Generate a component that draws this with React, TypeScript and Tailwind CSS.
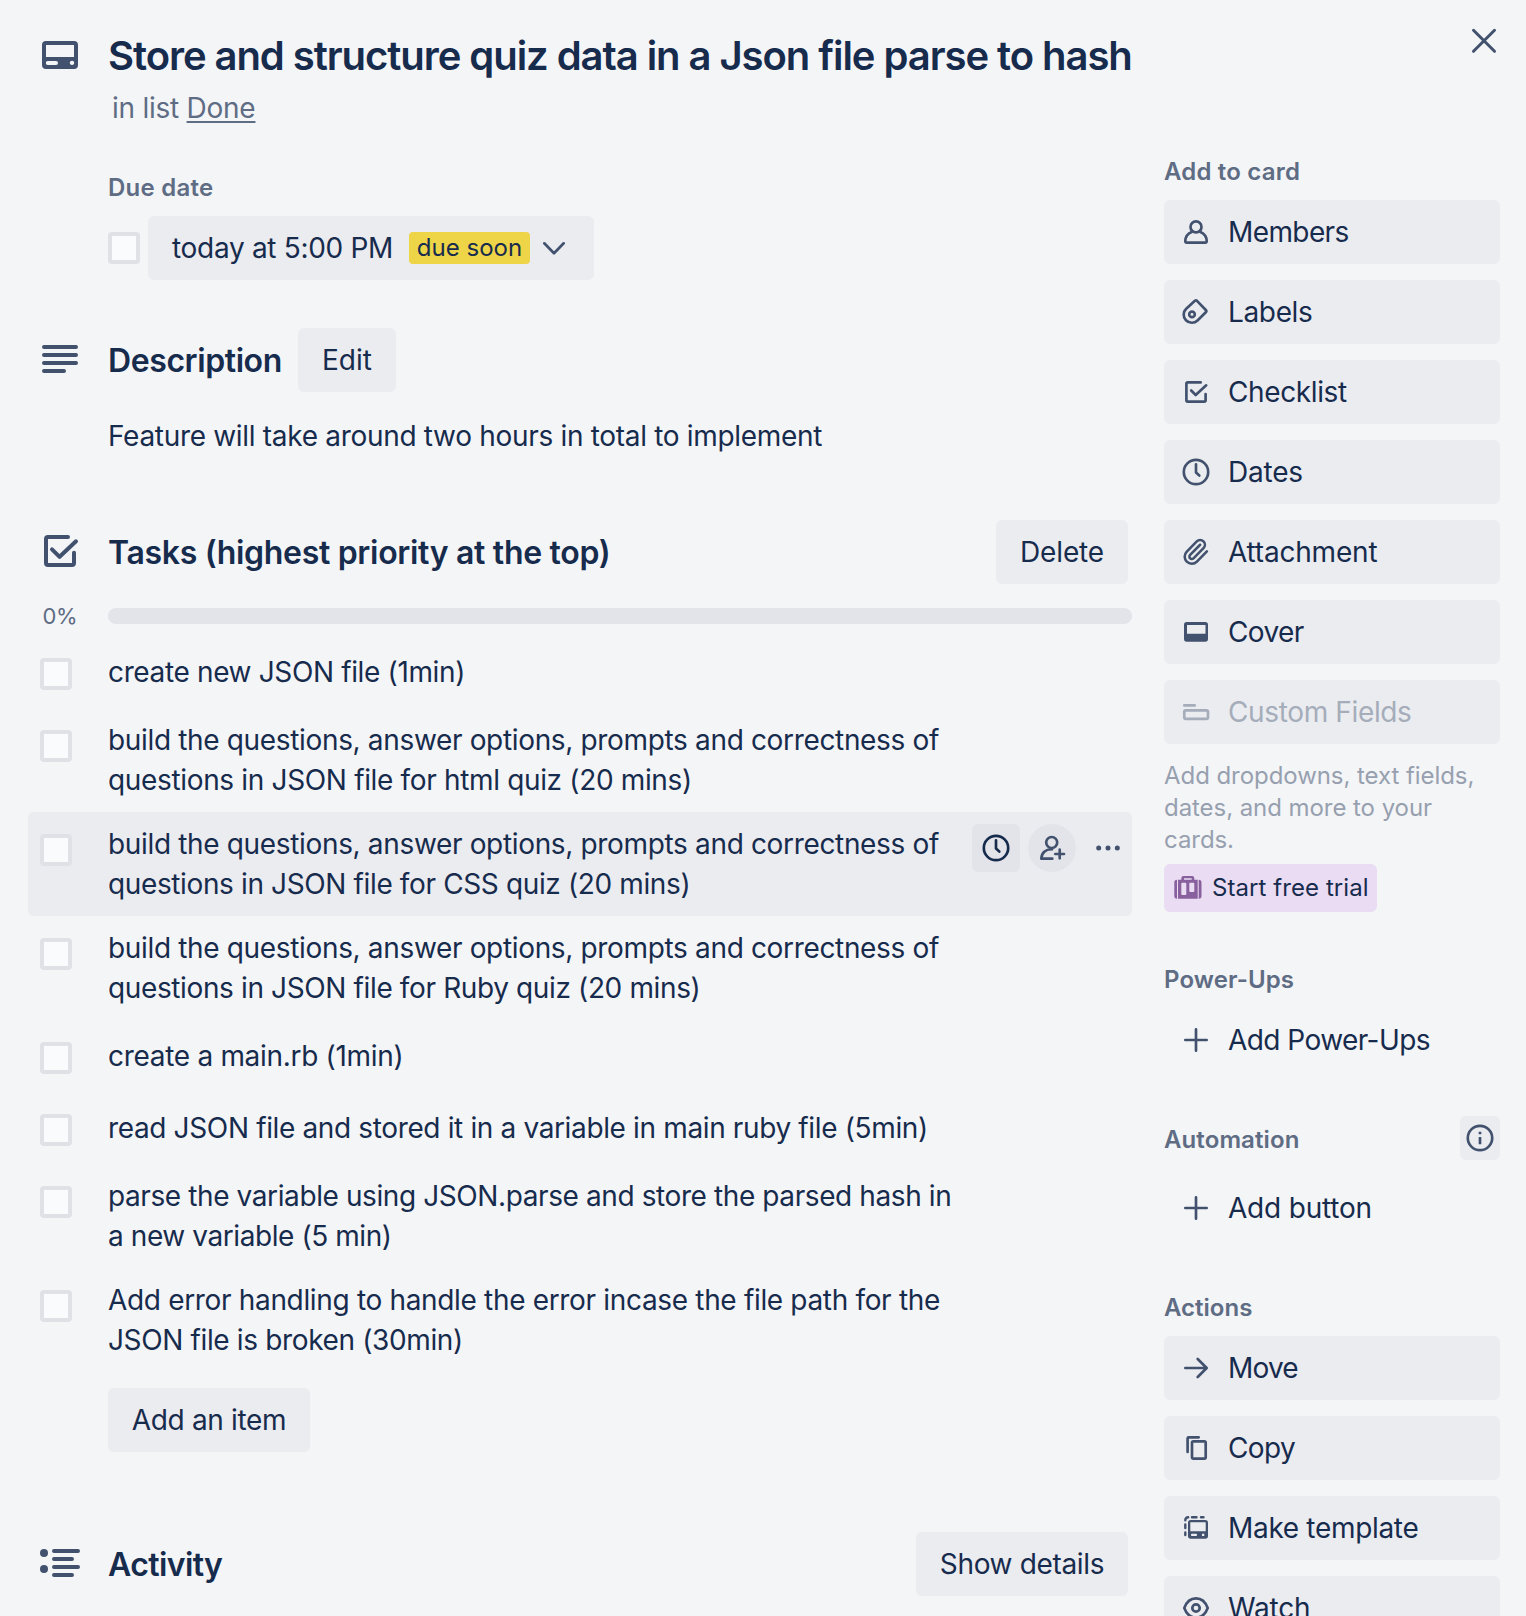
import React from "react";

type IconProps = { children: React.ReactNode; size?: number; className?: string };

function Icon({ children, size = 32, className = "" }: IconProps) {
  return (
    <svg
      width={size}
      height={size}
      viewBox={`0 0 ${size} ${size}`}
      fill="none"
      stroke="currentColor"
      strokeWidth={2.67}
      strokeLinecap="round"
      strokeLinejoin="round"
      className={`shrink-0 ${className}`}
    >
      {children}
    </svg>
  );
}

const Member = () => (
  <Icon>
    <circle cx="16" cy="10.9" r="5.5" />
    <path d="M11.6 16C7.8 17.6 5.4 21 5.3 25.1c0 .9.6 1.5 1.5 1.5h18.4c.9 0 1.5-.6 1.5-1.5-.1-4.1-2.5-7.5-6.3-9.1" />
  </Icon>
);
const Label = () => (
  <Icon>
    <path d="M6.2 12.7 14.9 4.8Q16 3.9 17 4.8L25.8 14Q26.9 15.2 25.8 16.3L17.5 24.5A8.1 8.1 0 0 1 6.2 12.7Z" />
    <circle cx="12" cy="18.4" r="2.8" />
  </Icon>
);
const Check = () => (
  <Icon>
    <path d="M20.7 6.4H7.7Q6.4 6.4 6.4 7.7V24.3Q6.4 25.6 7.7 25.6H24.3Q25.6 25.6 25.6 24.3V18" />
    <path d="M11.2 14.5 15.7 19 26.2 9.3" />
  </Icon>
);
const Clock = () => (
  <Icon>
    <circle cx="16" cy="16" r="12.2" />
    <path d="M16 8.3V16.5L19.3 19.5" />
  </Icon>
);
const Clip = () => (
  <Icon>
    <g transform="translate(1.1 1.6) scale(1.19)" strokeWidth="2.15">
      <path d="m16 6-8.414 8.586a2 2 0 0 0 2.829 2.829l8.414-8.586a4 4 0 1 0-5.657-5.657l-8.379 8.551a6 6 0 1 0 8.485 8.485l8.379-8.551" />
    </g>
  </Icon>
);
const Cover = () => (
  <Icon>
    <path
      stroke="none"
      fill="currentColor"
      fillRule="evenodd"
      d="M6.7 6H25.3A2.7 2.7 0 0 1 28 8.7V23A2.7 2.7 0 0 1 25.3 25.7H6.7A2.7 2.7 0 0 1 4 23V8.7A2.7 2.7 0 0 1 6.7 6ZM7 9V17.7H25.5V9Z"
    />
  </Icon>
);
const Fields = () => (
  <Icon>
    <path d="M4.3 9.4H14.7" />
    <rect x="4.3" y="14.4" width="23.7" height="8.4" rx="1.5" />
  </Icon>
);
const Plus = () => (
  <Icon>
    <path d="M16 5.3V26.7M5.3 16H26.7" />
  </Icon>
);
const Arrow = () => (
  <Icon>
    <path d="M5.3 16H26.3M17.7 7 26.7 16 17.7 25" />
  </Icon>
);
const Copy = () => (
  <Icon>
    <path d="M18.7 5.3H8.7Q7.6 5.3 7.6 6.4V20" />
    <rect x="12" y="9.4" width="13.7" height="17.2" rx="1.4" />
  </Icon>
);
const Template = () => (
  <Icon>
    <path
      stroke="none"
      fill="currentColor"
      fillRule="evenodd"
      d="M10.7 8H25.3A2.7 2.7 0 0 1 28 10.7V24A2.7 2.7 0 0 1 25.3 26.7H10.7A2.7 2.7 0 0 1 8 24V10.7A2.7 2.7 0 0 1 10.7 8ZM10.3 10.3V19.3H25.7V10.3ZM12 21.8A1.1 1.1 0 0 0 12 24H16A1.1 1.1 0 0 0 16 21.8ZM22 21.8V24H24.3V21.8Z"
    />
    <path strokeWidth="2.4" d="M5.3 8.2Q5.3 5.3 8.2 5.3M12 5.3H16.5M21 5.3H23.5M5.3 12.5V16M5.3 20.5V23" />
  </Icon>
);
const Eye = () => (
  <Icon>
    <path d="M4.3 16C6.5 10 10.5 6.4 16 6.4S25.5 10 27.7 16C25.5 22 21.5 25.6 16 25.6S6.5 22 4.3 16Z" />
    <circle cx="16" cy="16" r="3.7" />
  </Icon>
);
const Info = () => (
  <Icon>
    <circle cx="16" cy="16" r="12.2" />
    <path strokeLinecap="butt" d="M16 15V22.3M16 9.7V12.2" />
  </Icon>
);
const AddMember = () => (
  <Icon>
    <circle cx="15.7" cy="10.5" r="5.5" />
    <path d="M16 17.3C9.5 17 5.5 21 5.3 26.7H16.3M23.7 17.7V26.3M19.3 22H28" />
  </Icon>
);
const Briefcase = () => (
  <Icon size={28}>
    <g stroke="none" fill="currentColor">
      <path
        fillRule="evenodd"
        d="M4 5.7H7.3V4.2Q7.3 2 9.5 2H18.1Q20.3 2 20.3 4.2V5.7H23.7V24.7H4ZM10 4.3V5.7H17.7V4.3ZM8.3 8.7Q7.3 8.7 7.3 9.7V20Q7.3 21 8.3 21H11.3Q12.3 21 12.3 20V9.7Q12.3 8.7 11.3 8.7ZM16.3 8.7Q15.3 8.7 15.3 9.7V17Q15.3 18 16.3 18H19.3Q20.3 18 20.3 17V9.7Q20.3 8.7 19.3 8.7Z"
      />
      <path d="M3 5.7V24.7Q.3 24.7 .3 22V8.4Q.3 5.7 3 5.7ZM24.7 5.7Q27.5 5.7 27.5 8.4V22Q27.5 24.7 24.7 24.7Z" />
    </g>
  </Icon>
);

const CardIcon = () => (
  <Icon size={40} className="text-[#42526e]">
    <path
      stroke="none"
      fill="currentColor"
      fillRule="evenodd"
      d="M6 5H34A4 4 0 0 1 38 9V29A4 4 0 0 1 34 33H6A4 4 0 0 1 2 29V9A4 4 0 0 1 6 5ZM6 9V21H34V9ZM7.8 25A2 2 0 0 0 7.8 29H16A2 2 0 0 0 16 25ZM32 24.7A2.2 2.2 0 1 0 32.01 24.7Z"
    />
  </Icon>
);
const LinesIcon = () => (
  <Icon size={40} className="text-[#42526e]">
    <path strokeWidth="4" d="M4 7H36M4 15H36M4 23H36M4 31H24" />
  </Icon>
);
const TaskIcon = () => (
  <Icon size={40} className="text-[#42526e]">
    <path strokeWidth="4" d="M28 5H8Q6 5 6 7V31Q6 33 8 33H32Q34 33 34 31V20.7" />
    <path strokeWidth="4" d="M12 17.3 19.6 24.8 36 9.3" />
  </Icon>
);
const ActivityIcon = () => (
  <Icon size={40} className="text-[#42526e]">
    <path strokeWidth="4" d="M14 7H38M14 15H32M14 23H38M14 31H32" />
    <circle cx="4" cy="9" r="4" fill="currentColor" stroke="none" />
    <circle cx="4" cy="25" r="4" fill="currentColor" stroke="none" />
  </Icon>
);

function Checkbox() {
  return <span className="block size-8 shrink-0 rounded-[4px] border-4 border-[#dfe1e6] bg-[#fafbfc]" />;
}

type RowProps = { icon: React.ReactNode; text: string; variant?: "filled" | "plain" | "disabled"; tracking: string };

function SideButton({ icon, text, variant = "filled", tracking }: RowProps) {
  const look =
    variant === "filled"
      ? "bg-[#ebecf0] text-[#172b4d]"
      : variant === "disabled"
        ? "bg-[#ebecf0] text-[#a5adba]"
        : "text-[#172b4d]";
  return (
    <button className={`flex h-16 w-full shrink-0 items-center gap-4 rounded-[6px] px-4 text-[28px] leading-10 ${look}`}>
      <span className={variant === "disabled" ? "text-[#a5adba]" : "text-[#42526e]"}>{icon}</span>
      <span className={`whitespace-nowrap ${tracking}`}>{text}</span>
    </button>
  );
}

function SideHeading({ children, className }: { children: React.ReactNode; className: string }) {
  return <h3 className={`text-[24px] leading-8 font-semibold text-[#5e6c84] ${className}`}>{children}</h3>;
}

type Line = { text: string; tracking: string };
const tasks: { lines: Line[]; hovered?: boolean }[] = [
  { lines: [{ text: "create new JSON file (1min)", tracking: "tracking-[-0.36px]" }] },
  {
    lines: [
      { text: "build the questions, answer options, prompts and correctness of", tracking: "tracking-[-0.34px]" },
      { text: "questions in JSON file for html quiz (20 mins)", tracking: "tracking-[-0.34px]" },
    ],
  },
  {
    hovered: true,
    lines: [
      { text: "build the questions, answer options, prompts and correctness of", tracking: "tracking-[-0.34px]" },
      { text: "questions in JSON file for CSS quiz (20 mins)", tracking: "tracking-[-0.37px]" },
    ],
  },
  {
    lines: [
      { text: "build the questions, answer options, prompts and correctness of", tracking: "tracking-[-0.34px]" },
      { text: "questions in JSON file for Ruby quiz (20 mins)", tracking: "tracking-[-0.37px]" },
    ],
  },
  { lines: [{ text: "create a main.rb (1min)", tracking: "tracking-[-0.3px]" }] },
  {
    lines: [
      {
        text: "read JSON file and stored it in a variable in main ruby file (5min)",
        tracking: "tracking-[-0.36px]",
      },
    ],
  },
  {
    lines: [
      { text: "parse the variable using JSON.parse and store the parsed hash in", tracking: "tracking-[-0.4px]" },
      { text: "a new variable (5 min)", tracking: "tracking-[-0.42px]" },
    ],
  },
  {
    lines: [
      {
        text: "Add error handling to handle the error incase the file path for the",
        tracking: "tracking-[-0.33px]",
      },
      { text: "JSON file is broken (30min)", tracking: "tracking-[-0.36px]" },
    ],
  },
];

function Task({ lines, hovered }: { lines: Line[]; hovered?: boolean }) {
  return (
    <li className={`flex items-start rounded-[6px] py-3 pl-3 ${hovered ? "bg-[#ebecf0]" : ""}`}>
      <div className="w-[68px] shrink-0 pt-[10px]">
        <Checkbox />
      </div>
      <div className="flex min-h-12 flex-1 flex-col justify-center text-[28px] leading-10">
        {lines.map((l) => (
          <span key={l.text} className={`block whitespace-nowrap ${l.tracking}`}>
            {l.text}
          </span>
        ))}
      </div>
      {hovered && (
        <div className="flex items-center gap-2 text-[#42526e]">
          <span className="flex size-12 items-center justify-center rounded-[6px] bg-[#e2e4e9] text-[#172b4d]">
            <Clock />
          </span>
          <span className="flex size-12 items-center justify-center rounded-full bg-[#e2e4e9]">
            <AddMember />
          </span>
          <span className="flex h-12 w-12 items-center justify-center">
            <Icon>
              <g fill="currentColor" stroke="none">
                <circle cx="6.7" cy="16" r="2.5" />
                <circle cx="16" cy="16" r="2.5" />
                <circle cx="25.3" cy="16" r="2.5" />
              </g>
            </Icon>
          </span>
        </div>
      )}
    </li>
  );
}

const buttonClass =
  "flex h-16 shrink-0 items-center justify-center rounded-[6px] bg-[#ebecf0] text-[28px] leading-10 whitespace-nowrap";
const headingClass = "pt-0.5 text-[32px] leading-10 font-semibold whitespace-nowrap";

export default function App() {
  return (
    <div className="flex h-[1616px] w-[1526px] justify-between overflow-hidden bg-[#f4f5f7] pr-[26px] pl-7 font-['Inter',sans-serif] text-[#172b4d]">
      <main className="flex w-[1104px] flex-col">
        <header className="flex h-[124px] pt-9 pl-3">
          <div className="w-[68px] shrink-0">
            <CardIcon />
          </div>
          <div>
            <h1 className="text-[40px] leading-10 font-semibold tracking-[-1.055px] whitespace-nowrap">
              Store and structure quiz data in a Json file parse to hash
            </h1>
            <p className="mt-3 pl-1 text-[28px] leading-10 tracking-[-0.25px] text-[#5e6c84]">
              in list <span className="underline decoration-2 underline-offset-[3px]">Done</span>
            </p>
          </div>
        </header>

        <section className="mt-12 h-[156px] pl-20">
          <h3 className="text-[24px] leading-8 font-semibold tracking-[0.24px] text-[#5e6c84]">Due date</h3>
          <div className="mt-3 flex items-center gap-2">
            <Checkbox />
            <button className="flex h-16 w-[446px] items-center rounded-[6px] bg-[#ebecf0] pl-6">
              <span className="w-[237px] text-left text-[28px] leading-10 tracking-[-0.31px] whitespace-nowrap">
                today at 5:00 PM
              </span>
              <span className="flex h-8 w-[121px] items-center justify-center rounded-[4px] bg-[#edd547] text-[24px] leading-8 whitespace-nowrap">
                due soon
              </span>
              <Icon className="ml-2 text-[#42526e]">
                <path d="M6.3 11.3 16 21.3 25.7 11.3" />
              </Icon>
            </button>
          </div>
        </section>

        <section className="h-[192px] pl-3">
          <div className="flex h-16 items-center">
            <div className="w-[68px] shrink-0">
              <LinesIcon />
            </div>
            <h2 className={`${headingClass} w-[190px] tracking-[-0.41px]`}>Description</h2>
            <button className={`${buttonClass} w-[98px]`}>Edit</button>
          </div>
          <p className="mt-6 pl-[68px] text-[28px] leading-10 tracking-[-0.31px]">
            Feature will take around two hours in total to implement
          </p>
        </section>

        <section className="flex h-[1012px] shrink-0 flex-col">
          <div className="flex h-16 items-center pr-1 pl-3">
            <div className="w-[68px] shrink-0">
              <TaskIcon />
            </div>
            <h2 className={`${headingClass} flex-1 tracking-[-0.31px]`}>Tasks (highest priority at the top)</h2>
            <button className={`${buttonClass} w-[132px] tracking-[-0.17px]`}>Delete</button>
          </div>
          <div className="mt-6 flex h-4 items-center">
            <span className="w-20 pl-[14.5px] text-[22px] leading-6 tracking-[-0.4px] text-[#5e6c84]">0%</span>
            <div className="h-4 flex-1 rounded-full bg-[#e2e4e9]" />
          </div>
          <ul className="mt-3 flex flex-col">
            {tasks.map((t, i) => (
              <Task key={i} lines={t.lines} hovered={t.hovered} />
            ))}
          </ul>
          <div className="mt-4 flex pl-20">
            <button className={`${buttonClass} w-[202px] tracking-[-0.34px]`}>Add an item</button>
          </div>
        </section>

        <section className="flex h-16 shrink-0 items-center pr-1 pl-3">
          <div className="w-[68px] shrink-0">
            <ActivityIcon />
          </div>
          <h2 className={`${headingClass} flex-1 tracking-[-0.6px]`}>Activity</h2>
          <button className={`${buttonClass} w-[212px] tracking-[-0.34px]`}>Show details</button>
        </section>
      </main>

      <aside className="flex w-[336px] flex-col">
        <div className="flex h-[156px] shrink-0 justify-end pt-6">
          <Icon className="text-[#42526e]">
            <path strokeWidth="3" d="M5.5 6.3 26.5 27.3M26.5 6.3 5.5 27.3" />
          </Icon>
        </div>
        <SideHeading className="h-11 shrink-0 tracking-[0.19px]">Add to card</SideHeading>
        <div className="flex flex-col gap-4">
          <SideButton icon={<Member />} text="Members" tracking="tracking-[-0.6px]" />
          <SideButton icon={<Label />} text="Labels" tracking="tracking-[-0.35px]" />
          <SideButton icon={<Check />} text="Checklist" tracking="tracking-[-0.38px]" />
          <SideButton icon={<Clock />} text="Dates" tracking="tracking-[-0.2px]" />
          <SideButton icon={<Clip />} text="Attachment" tracking="tracking-[-0.2px]" />
          <SideButton icon={<Cover />} text="Cover" tracking="tracking-[-0.6px]" />
          <SideButton icon={<Fields />} text="Custom Fields" variant="disabled" tracking="tracking-[-0.36px]" />
        </div>
        <p className="mt-4 text-[24px] leading-8 tracking-[-0.06px] whitespace-nowrap text-[#97a0af]">
          Add dropdowns, text fields,
          <br />
          dates, and more to your
          <br />
          cards.
        </p>
        <button className="mt-2 flex h-12 w-[213px] shrink-0 items-center gap-[10px] rounded-[6px] bg-[#eadcf3] pl-[10px] text-[24px] leading-8 tracking-[0.07px] whitespace-nowrap">
          <span className="text-[#89609e]">
            <Briefcase />
          </span>
          Start free trial
        </button>

        <SideHeading className="mt-[52px] h-11 shrink-0 tracking-[0.1px]">Power-Ups</SideHeading>
        <SideButton icon={<Plus />} text="Add Power-Ups" variant="plain" tracking="tracking-[-0.56px]" />

        <div className="mt-11 mb-4 flex h-11 shrink-0 items-center justify-between">
          <SideHeading className="pt-[3px] tracking-[0.1px]">Automation</SideHeading>
          <span className="flex h-11 w-10 items-center justify-center rounded-[6px] bg-[#ebecf0] text-[#42526e]">
            <Info />
          </span>
        </div>
        <SideButton icon={<Plus />} text="Add button" variant="plain" tracking="tracking-[-0.2px]" />

        <SideHeading className="mt-[52px] h-11 shrink-0">Actions</SideHeading>
        <div className="flex flex-col gap-4">
          <SideButton icon={<Arrow />} text="Move" tracking="tracking-[-0.8px]" />
          <SideButton icon={<Copy />} text="Copy" tracking="tracking-[-0.6px]" />
          <SideButton icon={<Template />} text="Make template" tracking="tracking-[-0.32px]" />
          <SideButton icon={<Eye />} text="Watch" tracking="tracking-[-0.2px]" />
        </div>
      </aside>
    </div>
  );
}
